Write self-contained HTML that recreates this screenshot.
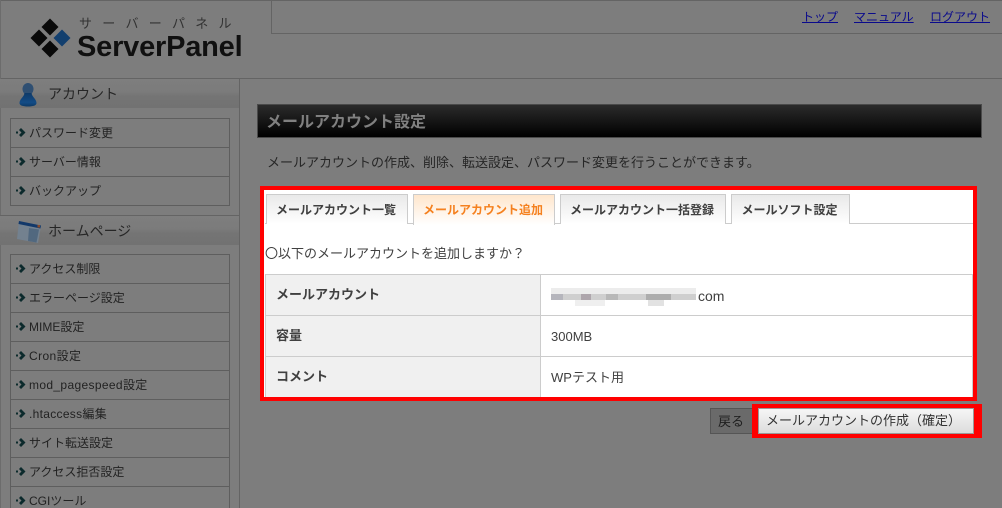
<!DOCTYPE html>
<html lang="ja"><head><meta charset="utf-8">
<style>
html,body{margin:0;padding:0;width:1002px;height:508px;overflow:hidden;background:#7d7d7d}
body{position:relative;font-family:"Liberation Sans","Noto Sans CJK JP",sans-serif;color:#262626;font-size:13px}
div,a,span{position:absolute;white-space:nowrap;box-sizing:border-box}
.l{background:#646464}
.sh{left:0;width:239px;height:29px;background:linear-gradient(#7e7e7e,#7b7b7b 45%,#747474 60%,#727272)}
.st{left:48px;font-size:14px;line-height:20px;color:#262626}
.box{left:10px;width:220px;border:1px solid #5e5e5e;border-bottom:0}
.r{left:0;width:218px;height:29px;border-bottom:1px solid #5e5e5e;font-size:12px;line-height:28px;padding-left:18px;color:#222}
.r svg{position:absolute;left:5px;top:9px}
.tab{top:194px;height:30px;border:1px solid #ccc;border-bottom:0;background:linear-gradient(#e9e9e9,#fff);font-size:12px;font-weight:bold;line-height:31px;text-align:center;padding-right:2px;color:#404040}
.lb{left:265px;width:276px;height:42px;border:1px solid #ccc;background:#f0f0f0;font-weight:bold;line-height:39px;padding-left:10px;color:#404040}
.v{left:540px;width:433px;height:42px;border:1px solid #ccc;background:#fff;line-height:41px;padding-left:10px;color:#404040}
</style></head><body>
<svg width="0" height="0" style="position:absolute"><defs><g id="b" fill="#0c2a2c"><path d="M0 3.500h2v2H0zM5 0l4.500 4.500L5 9 3 7l2.500-2.500L3 2z"/></g></defs></svg>

<div class="l" style="left:0;top:0;width:1002px;height:1px"></div>
<div class="l" style="left:0;top:78px;width:1002px;height:1px"></div>
<div class="l" style="left:271px;top:0;width:1px;height:34px"></div>
<div class="l" style="left:271px;top:33px;width:731px;height:1px"></div>
<div class="l" style="left:239px;top:79px;width:1px;height:429px"></div>
<div class="l" style="left:0;top:0;width:1px;height:508px;background:#6c6c6c"></div>

<svg style="position:absolute;left:28px;top:16px" width="44" height="44" viewBox="0 0 44 44">
<path fill="#0a0a0a" d="M22 2.500l8.500 8.500L22 19.500 13.500 11z"/>
<path fill="#0a0a0a" d="M11 13.500l8.500 8.500L11 30.500 2.500 22z"/>
<path fill="#0a0a0a" d="M22 24.500l8.500 8.500L22 41.500 13.500 33z"/>
<path fill="#123f6e" d="M34 13.500l8.500 8.500L34 30.500 25.500 22z"/>
</svg>
<div style="left:79px;top:14px;font-size:13px;line-height:20px;letter-spacing:10.300px;color:#333">サーバーパネル</div>
<div style="left:77px;top:30px;font-size:29px;font-weight:bold;line-height:34px;color:#101010;letter-spacing:-.2px">ServerPanel</div>

<a style="left:802px;top:8px;font-size:12px;line-height:18px;color:#0a0a8c;text-decoration:underline">トップ</a>
<a style="left:854px;top:8px;font-size:12px;line-height:18px;color:#0a0a8c;text-decoration:underline">マニュアル</a>
<a style="left:930px;top:8px;font-size:12px;line-height:18px;color:#0a0a8c;text-decoration:underline">ログアウト</a>

<div class="sh" style="top:79px"></div>
<svg style="position:absolute;left:19px;top:83px" width="18" height="24" viewBox="0 0 18 24">
<defs><linearGradient id="p" x1="0" y1="0" x2="0" y2="1"><stop offset="0" stop-color="#0f3a68"/><stop offset=".7" stop-color="#134c86"/><stop offset="1" stop-color="#0e3a66"/></linearGradient></defs>
<ellipse cx="9" cy="6" rx="5.500" ry="6" fill="#2f4f72"/><path d="M5.500 10h7c.5 4 5 6 5 10 0 2.500-3.500 3.500-8.500 3.500S.5 22.500.5 20c0-4 4.500-6 5-10z" fill="url(#p)"/>
</svg>
<div class="st" style="top:84px">アカウント</div>
<div class="box" style="top:118px;height:88px">
<div class="r" style="top:0"><svg width="10" height="9"><use href="#b"/></svg>パスワード変更</div>
<div class="r" style="top:29px"><svg width="10" height="9"><use href="#b"/></svg>サーバー情報</div>
<div class="r" style="top:58px"><svg width="10" height="9"><use href="#b"/></svg>バックアップ</div>
</div>

<div class="l" style="left:0;top:215px;width:239px;height:1px"></div>
<div class="sh" style="top:216px"></div>
<svg style="position:absolute;left:16px;top:219px" width="26" height="26" viewBox="0 0 26 26">
<path d="M3 2l22 5-3 17-21-4z" fill="#73818f"/><path d="M13 9l10 1.500-2.500 13-8.500-1.500z" fill="#51687f"/><path d="M3 2l22 4.500-.6 3L2.500 5z" fill="#12386a"/><rect x="21.500" y="6" width="2.500" height="2.500" fill="#8a4a2a"/>
</svg>
<div class="st" style="top:221px">ホームページ</div>
<div class="box" style="top:254px;height:260px">
<div class="r" style="top:0"><svg width="10" height="9"><use href="#b"/></svg>アクセス制限</div>
<div class="r" style="top:29px"><svg width="10" height="9"><use href="#b"/></svg>エラーページ設定</div>
<div class="r" style="top:58px"><svg width="10" height="9"><use href="#b"/></svg>MIME設定</div>
<div class="r" style="top:87px;letter-spacing:.4px"><svg width="10" height="9"><use href="#b"/></svg>Cron設定</div>
<div class="r" style="top:116px;letter-spacing:.35px"><svg width="10" height="9"><use href="#b"/></svg>mod_pagespeed設定</div>
<div class="r" style="top:145px;letter-spacing:.3px"><svg width="10" height="9"><use href="#b"/></svg>.htaccess編集</div>
<div class="r" style="top:174px"><svg width="10" height="9"><use href="#b"/></svg>サイト転送設定</div>
<div class="r" style="top:203px"><svg width="10" height="9"><use href="#b"/></svg>アクセス拒否設定</div>
<div class="r" style="top:232px"><svg width="10" height="9"><use href="#b"/></svg>CGIツール</div>
</div>

<div style="left:257px;top:104px;width:725px;height:34px;border:1px solid #4a4a4a;background:linear-gradient(#2b2b2b,#000);font-size:16px;font-weight:bold;line-height:35px;padding-left:8px;color:#808080">メールアカウント設定</div>
<div style="left:267px;top:153px;line-height:20px;color:#262626">メールアカウントの作成、削除、転送設定、パスワード変更を行うことができます。</div>

<div style="left:260px;top:186px;width:717px;height:215px;background:#fff;border:4px solid #f00"></div>
<div style="left:265px;top:223px;width:708px;height:1px;background:#ccc"></div>
<div class="tab" style="left:266px;width:142px">メールアカウント一覧</div>
<div class="tab" style="left:413px;width:142px;height:31px;background:linear-gradient(#ffe6cc,#fff);border-color:#ccc;color:#f5811f">メールアカウント追加</div>
<div class="tab" style="left:560px;width:166px">メールアカウント一括登録</div>
<div class="tab" style="left:731px;width:119px">メールソフト設定</div>
<div style="left:265px;top:244px;line-height:20px;color:#404040">〇以下のメールアカウントを追加しますか？</div>

<div class="lb" style="top:274px">メールアカウント</div><div class="v" style="top:274px"></div>
<div class="lb" style="top:315px">容量</div><div class="v" style="top:315px">300MB</div>
<div class="lb" style="top:356px;height:41px;border-bottom:0">コメント</div><div class="v" style="top:356px;height:41px;border-bottom:0">WPテスト用</div>

<svg style="position:absolute;left:551px;top:288px" width="146" height="18" viewBox="0 0 146 18">
<rect x="0" y="0" width="145" height="6" fill="#ececec"/><rect x="0" y="6" width="145" height="6" fill="#cfcfcf"/>
<rect x="0" y="6" width="12" height="6" fill="#b5b5bc"/><rect x="30" y="6" width="10" height="6" fill="#aea6ac"/><rect x="55" y="6" width="12" height="6" fill="#b8b8b8"/><rect x="95" y="6" width="25" height="6" fill="#adadad"/>
<rect x="24" y="12" width="30" height="6" fill="#efefef"/><rect x="97" y="12" width="16" height="6" fill="#e2e2e2"/>
</svg>
<div style="left:698px;top:288px;font-size:14px;line-height:16px;color:#404040">com</div>

<div style="left:710px;top:408px;width:46px;height:26px;background:#6a6a6a;border:1px solid #555;line-height:26px;padding-left:7px;color:#1e1e1e">戻る</div>
<div style="left:752px;top:404px;width:230px;height:34px;background:#f00"></div>
<div style="left:758px;top:408px;width:216px;height:26px;border:1px solid #9a9a9a;background:linear-gradient(#f6f6f6,#dcdcdc);line-height:24px;padding-left:7px;color:#333">メールアカウントの作成（確定）</div>
</body></html>
